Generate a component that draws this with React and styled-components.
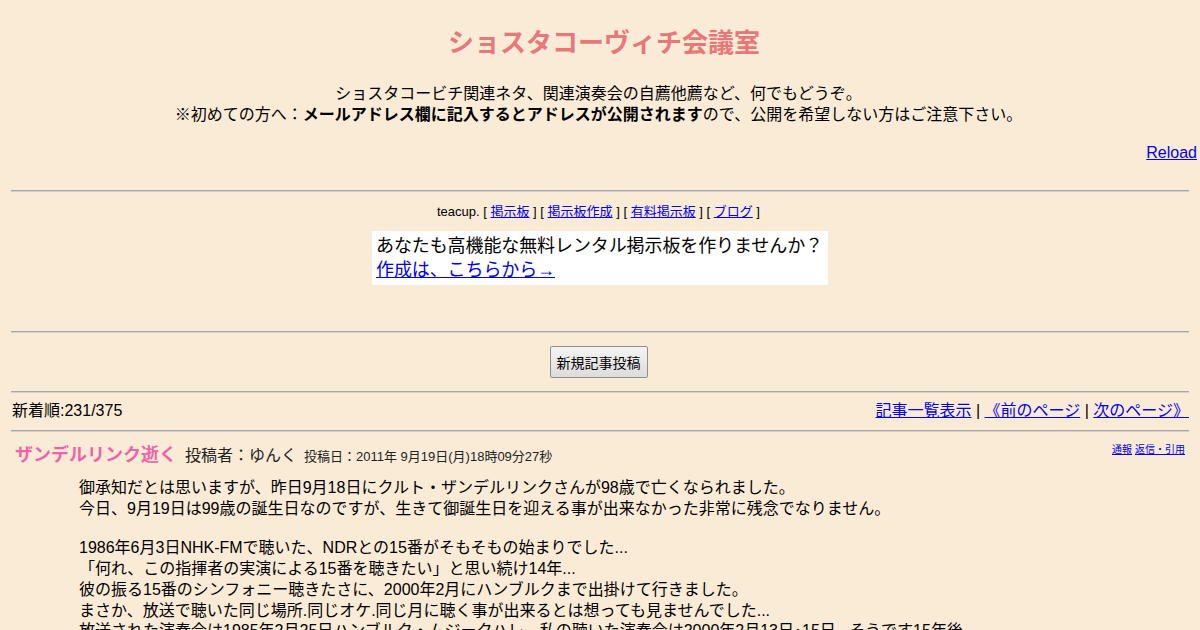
import React from "react";
import styled, { createGlobalStyle } from "styled-components";

const Global = createGlobalStyle`
  html, body {
    margin: 0;
    padding: 0;
    background: #faebd7;
  }
  body {
    font-family: "Liberation Sans", "Noto Sans CJK JP", sans-serif;
    color: #000;
  }
  a {
    color: #0000ee;
  }
`;

const Page = styled.div`
  padding: 0 3px 0 11px;
`;

const Title = styled.h1`
  margin: 0;
  padding-top: 26px;
  text-align: center;
  font-size: 26px;
  line-height: 34px;
  font-weight: bold;
  color: #e87878;
`;

const Intro = styled.p`
  margin: 0;
  padding-top: 23px;
  text-align: center;
  font-size: 16px;
  line-height: 21px;
  margin-left: -11px;
`;

const ReloadRow = styled.div`
  display: flex;
  justify-content: flex-end;
  margin-top: 17px;
  font-size: 16px;
  line-height: 21px;
`;

const Rule = styled.hr`
  border: 0;
  border-top: 1px solid #a8a8a8;
  border-bottom: 1px solid #d8d0c4;
  margin: ${(p) => p.$top || 0}px 8px 0 0;
  height: 0;
`;

const TeacupBar = styled.div`
  text-align: center;
  font-size: 13px;
  line-height: 17px;
  margin-top: 11px;
  margin-left: -11px;
`;

const AdBox = styled.div`
  width: 448px;
  margin: 11px auto 0;
  position: relative;
  left: -4px;
  background: #fff;
  padding: 3px 4px 3px 4px;
  font-size: 18px;
  line-height: 24px;
  white-space: nowrap;
  letter-spacing: -0.1px;
`;

const Center = styled.div`
  display: flex;
  justify-content: center;
  margin-left: -11px;
  margin-top: 13px;
`;

const PostButton = styled.button`
  font-family: inherit;
  font-size: 14px;
  height: 32px;
  padding: 0 6px;
  border: 1px solid #8f8f8f;
  border-radius: 2px;
  background: linear-gradient(#f4f4f4, #dcdcdc);
  color: #000;
`;

const NavRow = styled.div`
  display: flex;
  justify-content: space-between;
  align-items: center;
  margin: 7px 8px 0 1px;
  font-size: 16px;
  line-height: 22px;
`;

const PostHead = styled.div`
  display: flex;
  align-items: flex-start;
  margin: 10px 12px 0 4px;
`;

const HeadMain = styled.div`
  flex: 1;
  display: flex;
  align-items: baseline;
  gap: 8px;
`;

const Subject = styled.span`
  font-size: 18px;
  font-weight: bold;
  color: #f063a8;
  line-height: 24px;
`;

const Author = styled.span`
  font-size: 16px;
  color: #222;
`;

const PostDate = styled.span`
  font-size: 13px;
  color: #222;
  margin-left: -1px;
`;

const Tools = styled.div`
  font-size: 10px;
  line-height: 14px;
  display: flex;
  gap: 3px;
  margin-top: 1px;
`;

const Body = styled.div`
  margin: 11px 0 0 68px;
  font-size: 16px;
  line-height: 20.7px;
`;

const Para = styled.p`
  margin: 0 0 19px;
`;

export default function App() {
  return (
    <>
      <Global />
      <Page>
        <Title>ショスタコーヴィチ会議室</Title>
        <Intro>
          ショスタコービチ関連ネタ、関連演奏会の自薦他薦など、何でもどうぞ。
          <br />
          ※初めての方へ：<b>メールアドレス欄に記入するとアドレスが公開されます</b>ので、公開を希望しない方はご注意下さい。
        </Intro>
        <ReloadRow>
          <a href="#">Reload</a>
        </ReloadRow>
        <Rule $top={27} />
        <TeacupBar>
          teacup. [ <a href="#">掲示板</a> ] [ <a href="#">掲示板作成</a> ] [{" "}
          <a href="#">有料掲示板</a> ] [ <a href="#">ブログ</a> ]
        </TeacupBar>
        <AdBox>
          あなたも高機能な無料レンタル掲示板を作りませんか？
          <br />
          <a href="#">作成は、こちらから→</a>
        </AdBox>
        <Rule $top={46} />
        <Center>
          <PostButton>新規記事投稿</PostButton>
        </Center>
        <Rule $top={13} />
        <NavRow>
          <span>新着順:231/375</span>
          <span>
            <a href="#">記事一覧表示</a> | <a href="#">《前のページ</a> |{" "}
            <a href="#">次のページ》</a>
          </span>
        </NavRow>
        <Rule $top={8} />
        <PostHead>
          <HeadMain>
            <Subject>ザンデルリンク逝く</Subject>
            <Author>投稿者：ゆんく</Author>
            <PostDate>投稿日：2011年 9月19日(月)18時09分27秒</PostDate>
          </HeadMain>
          <Tools>
            <a href="#">通報</a>
            <a href="#">返信・引用</a>
          </Tools>
        </PostHead>
        <Body>
          <Para>
            御承知だとは思いますが、昨日9月18日にクルト・ザンデルリンクさんが98歳で亡くなられました。
            <br />
            今日、9月19日は99歳の誕生日なのですが、生きて御誕生日を迎える事が出来なかった非常に残念でなりません。
          </Para>
          <Para>
            1986年6月3日NHK-FMで聴いた、NDRとの15番がそもそもの始まりでした...
            <br />
            「何れ、この指揮者の実演による15番を聴きたい」と思い続け14年...
            <br />
            彼の振る15番のシンフォニー聴きたさに、2000年2月にハンブルクまで出掛けて行きました。
            <br />
            まさか、放送で聴いた同じ場所.同じオケ.同じ月に聴く事が出来るとは想っても見ませんでした...
            <br />
            放送された演奏会は1985年2月25日ハンブルク・ムジークハレ、私の聴いた演奏会は2000年2月13日･15日...そうです15年後...
          </Para>
        </Body>
      </Page>
    </>
  );
}
